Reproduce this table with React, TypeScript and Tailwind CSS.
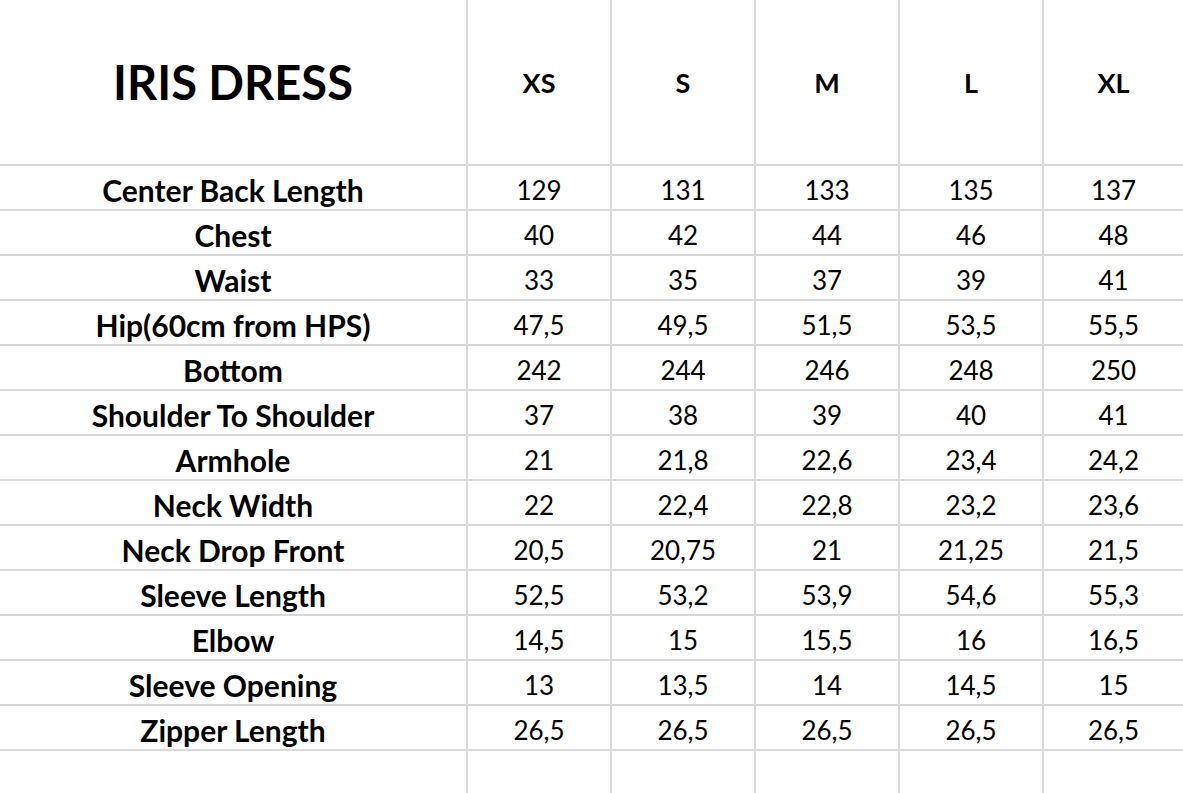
const sizes = ["XS", "S", "M", "L", "XL"];
const rows: [string, string[]][] = [
  ["Center Back Length", ["129", "131", "133", "135", "137"]],
  ["Chest", ["40", "42", "44", "46", "48"]],
  ["Waist", ["33", "35", "37", "39", "41"]],
  ["Hip(60cm from HPS)", ["47,5", "49,5", "51,5", "53,5", "55,5"]],
  ["Bottom", ["242", "244", "246", "248", "250"]],
  ["Shoulder To Shoulder", ["37", "38", "39", "40", "41"]],
  ["Armhole", ["21", "21,8", "22,6", "23,4", "24,2"]],
  ["Neck Width", ["22", "22,4", "22,8", "23,2", "23,6"]],
  ["Neck Drop Front", ["20,5", "20,75", "21", "21,25", "21,5"]],
  ["Sleeve Length", ["52,5", "53,2", "53,9", "54,6", "55,3"]],
  ["Elbow", ["14,5", "15", "15,5", "16", "16,5"]],
  ["Sleeve Opening", ["13", "13,5", "14", "14,5", "15"]],
  ["Zipper Length", ["26,5", "26,5", "26,5", "26,5", "26,5"]],
];

export default function App() {
  return (
    <div
      className="w-[1183px] h-[793px] overflow-hidden bg-[#d9d9d9] text-black"
      style={{ fontFamily: "Lato, 'Open Sans', sans-serif" }}
    >
      <div className="grid grid-cols-[466px_142px_142px_142px_142px_1fr] grid-rows-[164px_repeat(13,43px)_1fr] gap-[2px] h-full">
        <div className="bg-white flex items-center justify-center text-[47px] font-bold leading-none">
          IRIS DRESS
        </div>
        {sizes.map((s) => (
          <div key={s} className="bg-white flex items-center justify-center text-[27px] font-bold leading-none">
            {s}
          </div>
        ))}
        {rows.map(([label, vals]) => (
          <>
            <div key={label} className="bg-white flex items-center justify-center pt-[4px] text-[30px] font-bold leading-none">
              {label}
            </div>
            {vals.map((v, i) => (
              <div key={label + i} className="bg-white flex items-center justify-center pt-[5px] text-[26px] leading-none">
                {v}
              </div>
            ))}
          </>
        ))}
        {[0, 1, 2, 3, 4, 5].map((i) => (
          <div key={"e" + i} className="bg-white" />
        ))}
      </div>
    </div>
  );
}
